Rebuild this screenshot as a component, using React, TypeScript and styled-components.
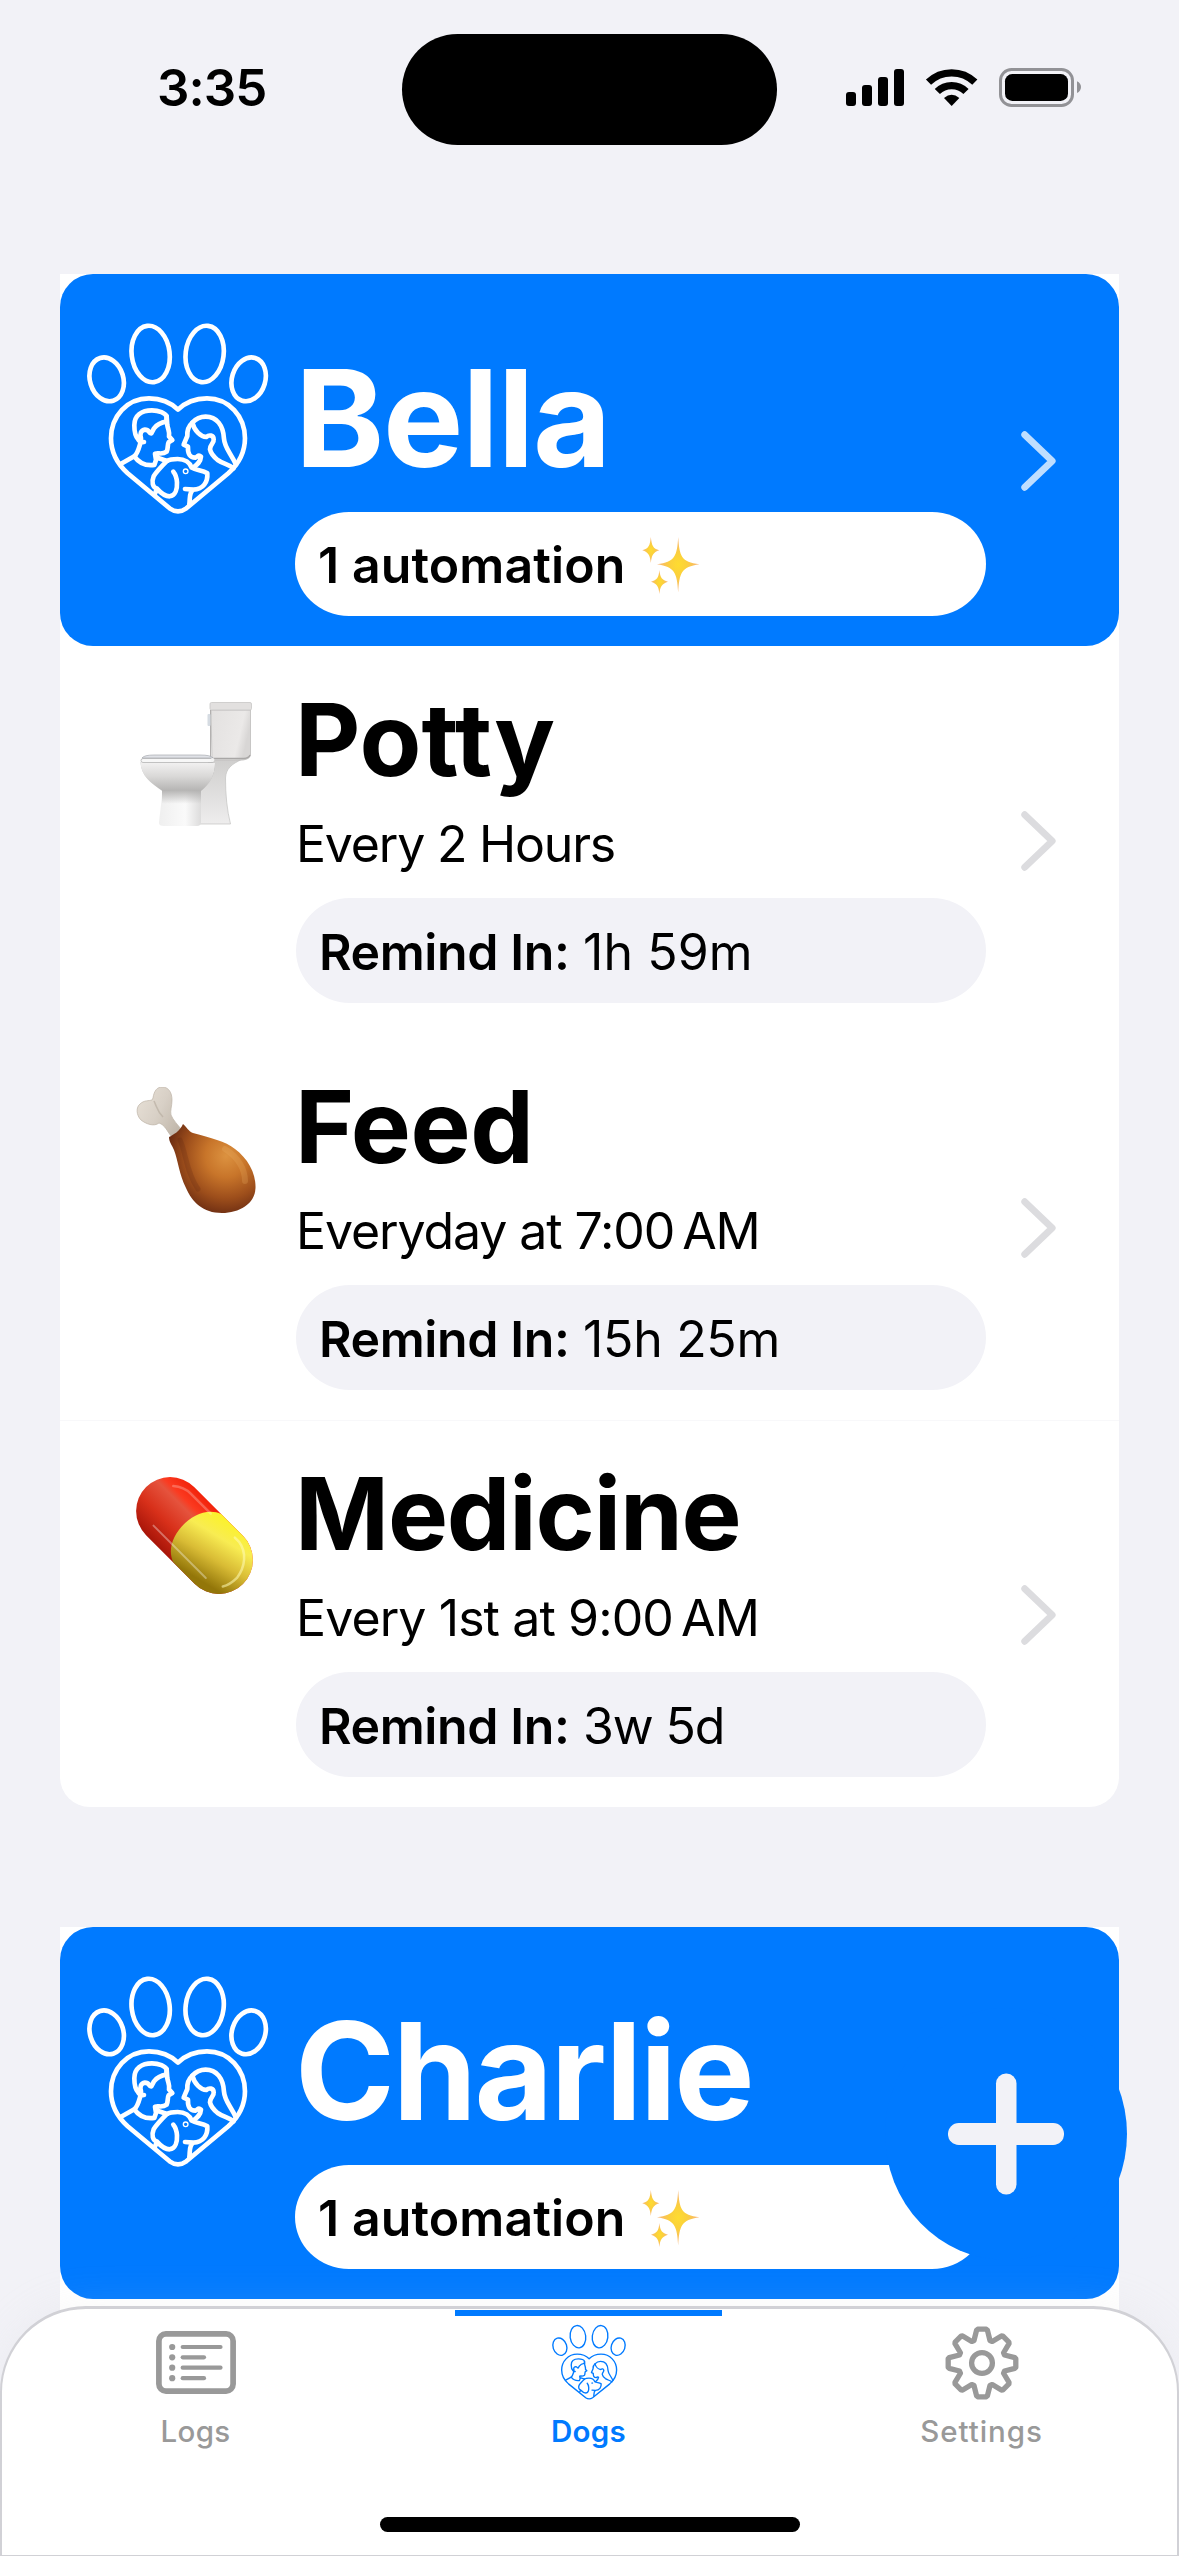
import React from "react";
import styled, { createGlobalStyle } from "styled-components";

const BLUE = "#007aff";
const CANVAS = "#f2f2f7";

const GlobalStyle = createGlobalStyle`
  *, *::before, *::after { box-sizing: border-box; }
  body {
    margin: 0;
    background: ${CANVAS};
    color: #000;
    font-family: Inter, "Liberation Sans", sans-serif;
  }
  svg { display: block; flex: none; }
`;

const Screen = styled.main`
  position: relative;
  width: 1179px;
  height: 2556px;
  overflow: hidden;
  background: ${CANVAS};
`;

/* ---------- status bar ---------- */

const StatusBar = styled.header`
  display: flex;
  align-items: flex-start;
  height: 274px;
  padding: 34px 0 0 157px;
`;

const Time = styled.time`
  width: 245px;
  padding-top: 25px;
  font-size: 51px;
  line-height: 58px;
  font-weight: 600;
  letter-spacing: -1px;
`;

const Island = styled.div`
  width: 375px;
  height: 111px;
  border-radius: 56px;
  background: #000;
`;

const StatusIcons = styled.div`
  padding: 21px 0 0 58px;
`;

/* ---------- dog cards ---------- */

const CardList = styled.div`
  display: flex;
  flex-direction: column;
  gap: 120px;
  padding: 0 60px;
`;

const Card = styled.section`
  overflow: hidden;
  border-radius: 0 0 30px 30px;
  background: #fff;
`;

const DogHeader = styled.div`
  display: flex;
  align-items: flex-start;
  height: 372px;
  border-radius: 33px;
  background: ${BLUE};
`;

const PawSlot = styled.div`
  width: 235px;
  padding: 48px 0 0 24.500px;
`;

const HeaderBody = styled.div`
  width: 691px;
  padding-top: 74px;
`;

const DogName = styled.h1<{ $tracking: number }>`
  height: 164px;
  margin: 0;
  color: #fff;
  font-size: 135px;
  line-height: 140px;
  font-weight: 700;
  letter-spacing: ${(p) => p.$tracking}px;
  white-space: nowrap;
`;

const AutomationPill = styled.div`
  display: flex;
  align-items: flex-start;
  height: 104px;
  padding-left: 23px;
  border-radius: 54px / 52px;
  background: #fff;
  font-size: 50px;
  line-height: 107px;
  font-weight: 600;
  letter-spacing: 0.1px;
  white-space: nowrap;
`;

const SparkleSlot = styled.span`
  padding: 25px 0 0 17px;
`;

const ChevronSlot = styled.div`
  display: flex;
  align-self: stretch;
  align-items: center;
  padding: 2px 0 0 35px;
`;

const ReminderRow = styled.div`
  display: flex;
  align-items: flex-start;
  height: 387px;
`;

const EmojiSlot = styled.div`
  width: 235px;
  padding: 54px 0 0 76px;
`;

const RowBody = styled.div`
  width: 691px;
  padding-top: 38px;
`;

const Title = styled.h2<{ $tracking: number }>`
  height: 130px;
  margin: 0;
  font-size: 101px;
  line-height: 110px;
  font-weight: 700;
  letter-spacing: ${(p) => p.$tracking}px;
  white-space: nowrap;
`;

const Schedule = styled.p<{ $tracking: number }>`
  height: 84px;
  margin: 0;
  padding-left: 1px;
  font-size: 50px;
  line-height: 61px;
  letter-spacing: ${(p) => p.$tracking}px;
  white-space: nowrap;
`;

const RemindPill = styled.div`
  display: flex;
  height: 105px;
  margin-left: 1px;
  padding-left: 23px;
  border-radius: 54px / 52.500px;
  background: ${CANVAS};
  font-size: 50px;
  line-height: 108px;
  white-space: nowrap;
`;

const RemindLabel = styled.strong`
  width: 264px;
  font-weight: 600;
  letter-spacing: -0.4px;
`;

const RemindValue = styled.span<{ $tracking: number }>`
  letter-spacing: ${(p) => p.$tracking}px;
`;

const Divider = styled.hr`
  height: 1px;
  margin: 0 0 -1px;
  border: 0;
  background: #f8f8fa;
`;

/* ---------- floating button ---------- */

const AddButton = styled.button`
  position: absolute;
  left: 885px;
  top: 2008px;
  display: flex;
  align-items: center;
  justify-content: center;
  width: 242px;
  height: 252px;
  padding: 0;
  border: 0;
  border-radius: 50%;
  background: ${BLUE};
`;

/* ---------- tab bar ---------- */

const TabBar = styled.nav`
  position: absolute;
  left: 0;
  right: 0;
  bottom: 0;
  display: flex;
  flex-direction: column;
  align-items: center;
  height: 250px;
  padding-top: 1px;
  border: solid #d1d1d6;
  border-width: 3px 2px 1px;
  border-radius: 86px 86px 0 0;
  background: #fff;
  box-shadow: 0 0 44px rgba(209, 209, 214, 0.16);
`;

const Tabs = styled.div`
  display: grid;
  grid-template-columns: repeat(3, 1fr);
  align-self: stretch;
  height: 207px;
  margin: 0 -1px 0 -3px;
`;

const Tab = styled.div<{ $active?: boolean }>`
  display: flex;
  flex-direction: column;
  align-items: center;
  color: ${(p) => (p.$active ? BLUE : "#999")};
  font-size: 29.500px;
  line-height: 36px;
  font-weight: ${(p) => (p.$active ? 600 : 500)};
`;

const TabIndicator = styled.div<{ $active?: boolean }>`
  width: 267px;
  height: 6px;
  background: ${(p) => (p.$active ? BLUE : "transparent")};
`;

const TabIcon = styled.div`
  display: flex;
  align-items: center;
  height: 75px;
  margin: 9px 0 13px;
`;

const TabLabel = styled.span<{ $tracking: number }>`
  letter-spacing: ${(p) => p.$tracking}px;
`;

const HomeIndicator = styled.div`
  width: 420px;
  height: 15px;
  border-radius: 8px;
  background: #000;
`;

/* ---------- drawings ---------- */

function SignalWifiBattery() {
  return (
    <svg width="260" height="65" viewBox="0 0 780 195">
      <rect x="33" y="111" width="30" height="42" rx="9" />
      <rect x="81" y="90" width="30" height="63" rx="9" />
      <rect x="129" y="66" width="30" height="87" rx="9" />
      <rect x="177" y="42" width="30" height="111" rx="9" />
      <g fill="none" stroke="#000" strokeWidth="22">
        <path d="M280.500 81.500A100 100 0 0 1 419.500 81.500" />
        <path d="M307 109.500A61 61 0 0 1 393 109.500" />
      </g>
      <path d="M350 153L327 129Q350 109 373 129Z" />
      <rect x="496.500" y="43.500" width="216" height="108" rx="33" fill="none" stroke="#929296" strokeWidth="9" />
      <rect x="510" y="57" width="189" height="81" rx="22" />
      <path d="M726 79C742 85 742 108 726 114Z" fill="#929296" />
    </svg>
  );
}

type PawProps = { width: number; height: number; color: string; stroke: number };

function PawLogo({ width, height, color, stroke }: PawProps) {
  return (
    <svg
      width={width}
      height={height}
      viewBox="30 35 556 580"
      preserveAspectRatio="none"
      fill="none"
      stroke={color}
      strokeWidth={stroke}
      strokeLinecap="round"
      strokeLinejoin="round"
    >
      <ellipse cx="95" cy="207" rx="50" ry="67" transform="rotate(-17 95 207)" />
      <ellipse cx="521" cy="207" rx="50" ry="67" transform="rotate(17 521 207)" />
      <ellipse cx="227" cy="131" rx="57" ry="85" transform="rotate(-7 227 131)" />
      <ellipse cx="389" cy="131" rx="57" ry="85" transform="rotate(7 389 131)" />
      <path d="M309 298C286 275 255 264 222 264C156 264 108 318 108 384C108 428 128 462 158 489L284 594Q309 612 334 594L460 489C490 462 510 428 510 384C510 318 462 264 396 264C363 264 332 275 309 298Z" />
      <path d="M207 395C200 396 194 394 190 388C180 378 178 362 178 345C178 315 200 300 231 300C252 300 271 309 275 318L274 334C256 337 244 345 237 354L229 369C220 370 224 358 210 358C197 360 194 372 198 384L197 395C192 412 189 428 178 438L137 461" />
      <path d="M275 318L277 345C280 360 285 368 282 378L292 389L281 396C277 402 280 414 275 424C262 434 252 427 240 430L243 449L238 464C215 467 192 458 178 438M243 441L276 452" />
      <path d="M352 337C364 324 378 319 392 319C425 319 445 345 447 385C449 414 468 428 483 463M352 337C338 350 336 362 337 377L326 403L339 409C338 432 345 442 361 442C370 438 370 431 378 439C377 455 366 463 355 472" />
      <path d="M352 337C358 362 378 379 394 380C402 373 416 374 416 387C418 398 405 401 405 417C408 432 418 441 428 449C447 462 462 462 476 474" />
      <path d="M276 452C286 446 298 446 308 446C330 446 345 458 350 472C364 481 382 479 397 489C399 515 385 537 355 538L330 536M276 452C266 462 244 485 236 498C229 515 233 532 246 535C254 544 266 558 284 558C302 556 307 535 306 516C305 500 300 490 295 484M246 535L240 550M354 539C341 549 346 565 343 582" />
      <circle cx="332" cy="483" r="2" />
    </svg>
  );
}

function Chevron({ color }: { color: string }) {
  return (
    <svg width="36" height="60" viewBox="0 0 36 60" fill="none" stroke={color} strokeWidth="6.800" strokeLinecap="round" strokeLinejoin="round">
      <path d="M3.700 3.700L31.200 30L3.700 56.300" />
    </svg>
  );
}

function Sparkles({ id }: { id: string }) {
  return (
    <svg width="60" height="58" viewBox="0 0 60 58">
      <defs>
        <radialGradient id={id}>
          <stop offset="0" stopColor="#fedc30" />
          <stop offset="0.400" stopColor="#fbd03c" />
          <stop offset="1" stopColor="#f8b27a" />
        </radialGradient>
      </defs>
      <g fill={`url(#${id})`}>
        <path d="M36.200 0C37.500 19 39 25 57.500 27.300C39 30 37.500 36 36.200 55.500C35 36 33 30 15 27.300C33 25 35 19 36.200 0Z" />
        <path d="M8.800 0C9.800 9 11 11.500 17.300 13.300C11 15.500 9.800 18 8.800 26C8 18 6.500 15.500 0.300 13.300C6.500 11.500 8 9 8.800 0Z" />
        <path d="M17.400 33C18.200 41 20 43 26 44.700C20 47 18.200 49 17.400 57C16.600 49 15 47 9 44.700C15 43 16.600 41 17.400 33Z" />
      </g>
    </svg>
  );
}

function Toilet() {
  return (
    <svg width="122" height="128" viewBox="-4 -2 122 128">
      <defs>
        <linearGradient id="tank" x1="0" x2="1" y1="0" y2="0.300">
          <stop offset="0" stopColor="#e3e1e0" />
          <stop offset="0.800" stopColor="#ebe9e8" />
          <stop offset="1" stopColor="#d8d6d5" />
        </linearGradient>
        <linearGradient id="bowl" x1="0" x2="0" y1="0" y2="1">
          <stop offset="0" stopColor="#f3f2f2" />
          <stop offset="0.500" stopColor="#d9d8d7" />
          <stop offset="1" stopColor="#b4b3b2" />
        </linearGradient>
        <linearGradient id="foot" x1="0" x2="1" y1="0" y2="0">
          <stop offset="0" stopColor="#c4c4c4" />
          <stop offset="0.250" stopColor="#efefef" />
          <stop offset="0.600" stopColor="#fafafa" />
          <stop offset="0.900" stopColor="#d0cfcf" />
          <stop offset="1" stopColor="#999" />
        </linearGradient>
        <linearGradient id="footShade" x1="0" x2="0" y1="0" y2="1">
          <stop offset="0" stopColor="#b0afae" />
          <stop offset="0.400" stopColor="#b0afae" stopOpacity="0" />
        </linearGradient>
        <linearGradient id="rear" x1="0" x2="0" y1="0" y2="1">
          <stop offset="0" stopColor="#cfcecd" />
          <stop offset="1" stopColor="#eeeded" />
        </linearGradient>
      </defs>
      <path d="M70 57L103 57C91 62 86 67 85.500 76C85.500 93 87 108 90.500 122L58 122V84Z" fill="url(#rear)" stroke="#c2c1c0" strokeWidth="0.700" />
      <path d="M71 8H110.500V53Q110 57 103 58H72Z" fill="url(#tank)" stroke="#bebcbb" strokeWidth="0.800" />
      <path d="M72 56.500H104Q109 56 110 53" fill="none" stroke="#a9a7a6" strokeWidth="1.400" />
      <rect x="70" y="0.500" width="41.500" height="7.500" rx="1.500" fill="#e2e0df" stroke="#c8c6c5" strokeWidth="0.800" />
      <path d="M70.500 8V55" stroke="#aaa8a7" strokeWidth="0.900" />
      <rect x="67.500" y="12" width="3" height="12" rx="1" fill="#d5dbe2" />
      <path d="M0.500 60C1 74 11 81 22 89C22 98 20 110 19 121Q19 124 24 124H57Q61 124 61 120V89C70 81 75 73 75 61Z" fill="url(#foot)" />
      <path d="M22 87V124H61V87Z" fill="url(#footShade)" />
      <path d="M0.500 60C1 74 11 81 22.500 89Q40 87 61 89C70 82 75 73 75 61Z" fill="url(#bowl)" />
      <rect x="1" y="56.500" width="73" height="4" rx="2" fill="#f7f7f7" stroke="#aaa" strokeWidth="0.700" />
      <path d="M2 56Q4 53 14 53H60Q71 53 73 56Z" fill="#e0e2e7" stroke="#a8aab0" strokeWidth="0.700" />
      <circle cx="72.500" cy="58" r="2" fill="#f2f2f2" />
    </svg>
  );
}

function Drumstick() {
  return (
    <svg width="122" height="128" viewBox="-1 0 122 128">
      <defs>
        <radialGradient id="meat" cx="0.660" cy="0.360" r="0.680">
          <stop offset="0" stopColor="#dc9240" />
          <stop offset="0.350" stopColor="#c8752a" />
          <stop offset="0.700" stopColor="#9d4e1b" />
          <stop offset="1" stopColor="#6b2c12" />
        </radialGradient>
        <linearGradient id="bone" x1="0" y1="0.200" x2="1" y2="0.800">
          <stop offset="0" stopColor="#e6dfd5" />
          <stop offset="0.500" stopColor="#d8d0c6" />
          <stop offset="1" stopColor="#c0b6a9" />
        </linearGradient>
      </defs>
      <path d="M16 11C17 4 20 0 25 0C32 0 35 6 35 13C35 19 33 24 34 28C36 33 41 38 44 42L34 49C30 44 28 38 22 36C17 40 9 37 4 33C-1 28 -1 20 3 17C7 13 12 14 15 13Z" fill="url(#bone)" stroke="#bdb3a6" strokeWidth="0.700" />
      <path d="M17 14C20 20 20 24 26 30" fill="none" stroke="#b9afa3" strokeWidth="1.600" opacity="0.700" />
      <path d="M46 37C50 40 51 44 56 46C74 51 88 54 98 62C110 71 119 85 118.500 101C118 117 102 126 85 126C66 126 55 115 49 101C42 87 41 73 37 63C35 58 32 55 32 50C36 48 43 44 46 37Z" fill="url(#meat)" />
      <path d="M43 53C49 65 49 85 61 102" fill="none" stroke="#5d2610" strokeWidth="5" strokeLinecap="round" opacity="0.220" />
      <path d="M88 62C101 70 108 82 108 94" fill="none" stroke="#edb062" strokeWidth="6" strokeLinecap="round" opacity="0.250" />
    </svg>
  );
}

function Capsule() {
  return (
    <svg width="122" height="128" viewBox="0 -3 122 128">
      <defs>
        <linearGradient id="capRed" x1="0" x2="0" y1="0" y2="1">
          <stop offset="0" stopColor="#f2230b" />
          <stop offset="0.220" stopColor="#fb3a20" />
          <stop offset="0.320" stopColor="#e5533d" />
          <stop offset="0.650" stopColor="#d8301a" />
          <stop offset="1" stopColor="#a81509" />
        </linearGradient>
        <linearGradient id="capYellow" x1="0" x2="0.300" y1="0" y2="1">
          <stop offset="0" stopColor="#fcf41f" />
          <stop offset="0.350" stopColor="#f8ec52" />
          <stop offset="0.650" stopColor="#d9bc35" />
          <stop offset="1" stopColor="#937609" />
        </linearGradient>
      </defs>
      <g transform="translate(58.500 58.500) rotate(45)">
        <rect x="-68.500" y="-34" width="137" height="68" rx="34" fill="url(#capRed)" />
        <path d="M4 -34H34.500A34 34 0 0 1 34.500 34H4C-22 25 -22 -25 4 -34Z" fill="url(#capYellow)" />
        <path d="M-36 22H38" stroke="#fff" strokeWidth="2" strokeLinecap="round" opacity="0.350" />
        <path d="M-50 -20Q-42 -27 -32 -27H-4" fill="none" stroke="#fff" strokeWidth="2.500" strokeLinecap="round" opacity="0.250" />
        <path d="M30 -27H36C49 -25 58 -14 60 0Q60 10 56 16" fill="none" stroke="#fffbb8" strokeWidth="2.500" strokeLinecap="round" opacity="0.550" />
      </g>
    </svg>
  );
}

function PlusIcon() {
  return (
    <svg width="116" height="122" viewBox="0 0 116 122" fill={CANVAS}>
      <rect x="0" y="50" width="116" height="22" rx="10.800" />
      <rect x="48" y="0.500" width="20.500" height="121" rx="10" />
    </svg>
  );
}

function LogsIcon() {
  const rows = [
    { y: 16, w: 42 },
    { y: 26.3, w: 25.5 },
    { y: 36.7, w: 42 },
    { y: 47.2, w: 25.5 },
  ];
  return (
    <svg width="80" height="63" viewBox="0 0 80 63" fill="currentColor">
      <rect x="2.900" y="2.900" width="74.200" height="57.200" rx="7" fill="none" stroke="currentColor" strokeWidth="5.700" />
      {rows.map((r) => (
        <React.Fragment key={r.y}>
          <circle cx="16.200" cy={r.y} r="3.100" />
          <rect x="24.600" y={r.y - 2.1} width={r.w} height="4.200" rx="2.100" />
        </React.Fragment>
      ))}
    </svg>
  );
}

function GearIcon() {
  const tooth: [number, number][] = [
    [-8, -22.5],
    [-5.4, -32.8],
    [-4.2, -33.8],
    [4.2, -33.8],
    [5.4, -32.8],
    [8, -22.5],
  ];
  const points = Array.from({ length: 8 }, (_, i) => {
    const a = (i * Math.PI) / 4;
    return tooth
      .map(([x, y]) => `${(x * Math.cos(a) - y * Math.sin(a)).toFixed(2)},${(x * Math.sin(a) + y * Math.cos(a)).toFixed(2)}`)
      .join(" ");
  }).join(" ");
  return (
    <svg width="74" height="74" viewBox="-37 -37 74 74" fill="none" stroke="currentColor" strokeWidth="5.300" strokeLinejoin="round">
      <polygon points={points} />
      <circle r="10.400" />
    </svg>
  );
}

/* ---------- page ---------- */

function DogHead({ name, tracking, withChevron }: { name: string; tracking: number; withChevron?: boolean }) {
  return (
    <DogHeader>
      <PawSlot>
        <PawLogo width={185.3} height={193.3} color="#fff" stroke={14} />
      </PawSlot>
      <HeaderBody>
        <DogName $tracking={tracking}>{name}</DogName>
        <AutomationPill>
          1 automation
          <SparkleSlot>
            <Sparkles id={`spark-${name}`} />
          </SparkleSlot>
        </AutomationPill>
      </HeaderBody>
      {withChevron && (
        <ChevronSlot>
          <Chevron color="#bfdeff" />
        </ChevronSlot>
      )}
    </DogHeader>
  );
}

const reminders = [
  { title: "Potty", tracking: 0, schedule: "Every 2 Hours", st: -1.2, left: "1h 59m", lt: 0.1, icon: <Toilet /> },
  { title: "Feed", tracking: -0.5, schedule: "Everyday at 7:00\u2009AM", st: -1.1, left: "15h 25m", lt: -0.3, icon: <Drumstick /> },
  { title: "Medicine", tracking: -1.2, schedule: "Every 1st at 9:00\u2009AM", st: -0.9, left: "3w 5d", lt: -1.1, icon: <Capsule />, divided: true },
];

const tabs = [
  { label: "Logs", tracking: 0.3, icon: <LogsIcon /> },
  { label: "Dogs", tracking: 0.3, active: true, icon: <PawLogo width={76} height={76.5} color={BLUE} stroke={10} /> },
  { label: "Settings", tracking: 0.95, icon: <GearIcon /> },
];

export default function App() {
  return (
    <Screen>
      <GlobalStyle />
      <StatusBar>
        <Time>3:35</Time>
        <Island />
        <StatusIcons>
          <SignalWifiBattery />
        </StatusIcons>
      </StatusBar>

      <CardList>
        <Card>
          <DogHead name="Bella" tracking={-1.2} withChevron />
          {reminders.map((r) => (
            <React.Fragment key={r.title}>
              {r.divided && <Divider />}
              <ReminderRow>
                <EmojiSlot>{r.icon}</EmojiSlot>
                <RowBody>
                  <Title $tracking={r.tracking}>{r.title}</Title>
                  <Schedule $tracking={r.st}>{r.schedule}</Schedule>
                  <RemindPill>
                    <RemindLabel>Remind In:</RemindLabel>
                    <RemindValue $tracking={r.lt}>{r.left}</RemindValue>
                  </RemindPill>
                </RowBody>
                <ChevronSlot>
                  <Chevron color="#dcdcdf" />
                </ChevronSlot>
              </ReminderRow>
            </React.Fragment>
          ))}
        </Card>
        <Card>
          <DogHead name="Charlie" tracking={-2.2} />
          <ReminderRow />
        </Card>
      </CardList>

      <AddButton aria-label="Add">
        <PlusIcon />
      </AddButton>

      <TabBar>
        <Tabs>
          {tabs.map((t) => (
            <Tab key={t.label} $active={t.active}>
              <TabIndicator $active={t.active} />
              <TabIcon>{t.icon}</TabIcon>
              <TabLabel $tracking={t.tracking}>{t.label}</TabLabel>
            </Tab>
          ))}
        </Tabs>
        <HomeIndicator />
      </TabBar>
    </Screen>
  );
}
